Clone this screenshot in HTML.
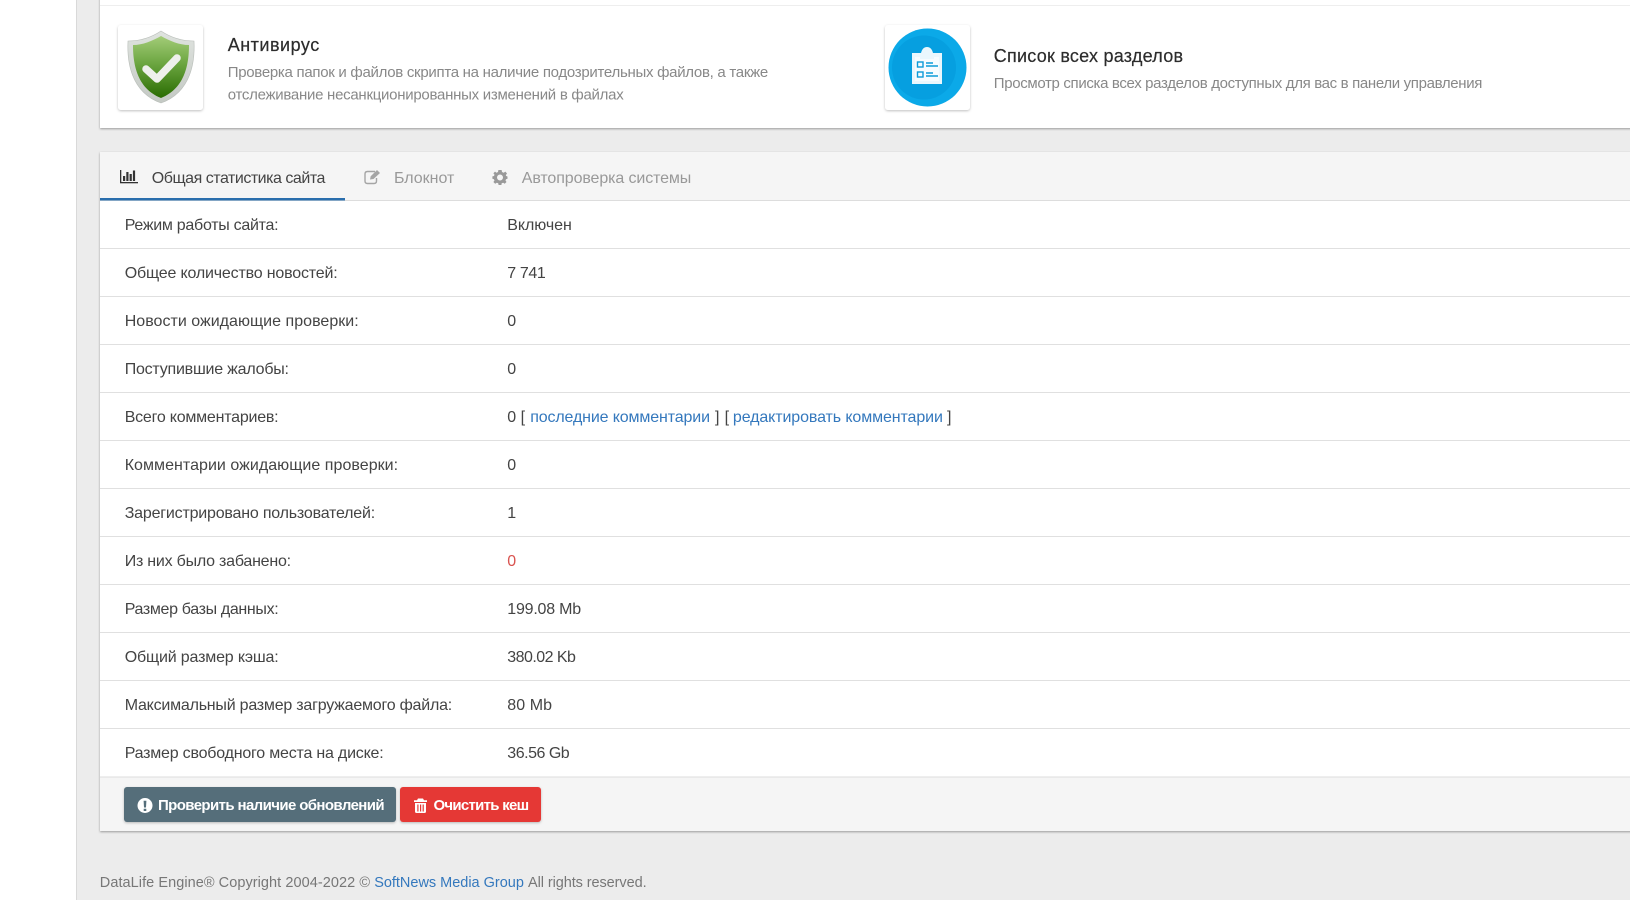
<!DOCTYPE html>
<html lang="ru">
<head>
<meta charset="utf-8">
<title>DataLife Engine</title>
<style>
html,body{margin:0;padding:0;width:1630px;height:900px;overflow:hidden;background:#ececec}
svg{display:block;position:absolute;left:0;top:0;filter:blur(.3px)}
text{font-family:"Liberation Sans",Arial,sans-serif;font-size:16px;fill:#444;white-space:pre}
.l{fill:#444}
.a{fill:#3478bd}
.d{font-size:15px;fill:#888}
.t{font-size:18px;fill:#2c2c2c;stroke:#2c2c2c;stroke-width:.2}
.m{fill:#999}
.b{font-size:15px;font-weight:bold;fill:#fff}
.f{font-size:14.5px;fill:#777}
</style>
</head>
<body>
<svg width="1630" height="900" viewBox="0 0 1630 900" xmlns="http://www.w3.org/2000/svg">
<defs>
<linearGradient id="sg" x1="0" y1="0" x2="0" y2="1"><stop offset="0" stop-color="#a3cc78"/><stop offset=".45" stop-color="#6ba540"/><stop offset="1" stop-color="#2a6c02"/></linearGradient>
<linearGradient id="sr" x1="0" y1="0" x2="0" y2="1"><stop offset="0" stop-color="#dfe3df"/><stop offset="1" stop-color="#c4c9c4"/></linearGradient>
<filter id="sh1" x="-5%" y="-20%" width="110%" height="140%"><feDropShadow dx="0" dy="1" stdDeviation="1" flood-color="#000" flood-opacity=".35"/></filter>
<filter id="sh2" x="-20%" y="-20%" width="140%" height="140%"><feDropShadow dx="0" dy="1" stdDeviation="1.2" flood-color="#000" flood-opacity=".25"/></filter>
</defs>

<!-- layout -->
<rect x="0" y="0" width="76" height="900" fill="#fff"/>
<rect x="76" y="0" width="1" height="900" fill="#d9d9d9"/>

<!-- top panel -->
<rect x="100" y="-10" width="1540" height="138" fill="#fff" filter="url(#sh1)"/>
<rect x="100" y="5" width="1530" height="1" fill="#eee"/>

<!-- shield tile -->
<rect x="118" y="25" width="85" height="85" rx="3" fill="#fff" filter="url(#sh2)"/>
<path d="M161 31 C152 37 141 41 128 41 C127 60 130 92 161 103 C192 92 195 60 194 41 C181 41 170 37 161 31Z" fill="url(#sr)" stroke="#b9beb9" stroke-width=".6"/>
<path d="M161 36 C152 41 143 45 133 45 C133 62 136 88 161 98 C186 88 189 62 189 45 C179 45 170 41 161 36Z" fill="url(#sg)"/>
<path d="M146 69 L157 79 L177 58" fill="none" stroke="#eef0ec" stroke-width="7.500" stroke-linecap="round" stroke-linejoin="round"/>

<text x="227.700" y="51" class="t" textLength="91.500">Антивирус</text>
<text x="227.700" y="77" class="d" textLength="540.500">Проверка папок и файлов скрипта на наличие подозрительных файлов, а также</text>
<text x="227.700" y="99.500" class="d" textLength="396">отслеживание несанкционированных изменений в файлах</text>

<!-- list tile -->
<rect x="885" y="25" width="85" height="85" rx="3" fill="#fff" filter="url(#sh2)"/>
<circle cx="927.500" cy="67.500" r="39" fill="#0ba9e8"/>
<circle cx="924" cy="67.500" r="32" fill="#069fe0"/>
<path d="M912 53 H921 C922 49 924 47 927 47 C930 47 932 49 933 53 H942 V84 H912Z" fill="#eaf7fd"/>
<path d="M915 57 H920 V59 H934 V57 H939 V81 H915Z" fill="#f6fcff"/>
<g fill="none" stroke="#0c9bd8" stroke-width="1.400">
<rect x="917.500" y="62" width="5.500" height="5"/><rect x="917.500" y="72" width="5.500" height="5"/>
<path d="M926 63 H933 M926 66 H938 M926 73 H933 M926 76 H938"/>
</g>

<text x="993.800" y="62" class="t" textLength="189.200">Список всех разделов</text>
<text x="993.800" y="88" class="d" textLength="488.600">Просмотр списка всех разделов доступных для вас в панели управления</text>

<!-- stats panel -->
<rect x="100" y="152" width="1540" height="679" fill="#fff" filter="url(#sh1)"/>
<rect x="100" y="152" width="1530" height="48" fill="#f5f5f5"/>
<rect x="100" y="200" width="1530" height="1" fill="#ddd"/>
<rect x="100" y="198" width="245" height="2.500" fill="#2a6ead"/>

<!-- tab icons -->
<g fill="#333">
<rect x="120" y="170" width="1.300" height="13"/><rect x="120" y="182" width="18" height="1.300"/>
<rect x="123" y="176" width="2.200" height="5"/><rect x="126.300" y="172" width="2.200" height="9"/><rect x="129.600" y="174" width="2.200" height="7"/><rect x="132.900" y="170.500" width="2.200" height="10.500"/>
</g>
<path d="M375 171.500 H367.500 Q365 171.500 365 174 V181 Q365 183.500 367.500 183.500 H374 Q376.500 183.500 376.500 181 V178" fill="none" stroke="#a5a5a5" stroke-width="1.400"/>
<path d="M370 179.500 L370.700 176.300 L377 170 L380 173 L373.500 179 Z" fill="#a5a5a5"/>
<g transform="translate(500 177)">
<path fill="#999" fill-rule="evenodd" d="M-1.600 -7 H1.600 L2 -5 L3.700 -4.300 L5.400 -5.400 L7 -3.500 L5.800 -1.900 L6.200 -1 L7.500 -.5 V1.800 L6 2.200 L5.500 3.500 L6.500 5 L4.700 6.700 L3.200 5.700 L1.700 6.300 L1.400 8 H-1.400 L-1.800 6.300 L-3.200 5.700 L-4.800 6.700 L-6.600 5 L-5.500 3.500 L-6.100 2.200 L-7.600 1.800 V-.6 L-6 -1 L-5.500 -2.300 L-6.600 -3.700 L-5 -5.400 L-3.500 -4.300 L-2 -5 Z M0 -2.500 A3 3 0 1 0 .01 3.500 A3 3 0 1 0 0 -2.500 Z"/>
</g>

<text x="151.800" y="183" class="l" textLength="173.600">Общая статистика сайта</text>
<text x="394" y="183" class="m" textLength="60.300">Блокнот</text>
<text x="521.800" y="183" class="m" textLength="169.500">Автопроверка системы</text>

<!-- row dividers -->
<g fill="#e0e0e0">
<rect x="100" y="248" width="1530" height="1"/><rect x="100" y="296" width="1530" height="1"/>
<rect x="100" y="344" width="1530" height="1"/><rect x="100" y="392" width="1530" height="1"/>
<rect x="100" y="440" width="1530" height="1"/><rect x="100" y="488" width="1530" height="1"/>
<rect x="100" y="536" width="1530" height="1"/><rect x="100" y="584" width="1530" height="1"/>
<rect x="100" y="632" width="1530" height="1"/><rect x="100" y="680" width="1530" height="1"/>
<rect x="100" y="728" width="1530" height="1"/>
</g>

<!-- labels -->
<text x="124.700" y="230" class="l" textLength="153.900">Режим работы сайта:</text>
<text x="124.700" y="278" class="l" textLength="213">Общее количество новостей:</text>
<text x="124.700" y="326" class="l" textLength="234">Новости ожидающие проверки:</text>
<text x="124.700" y="374" class="l" textLength="164.300">Поступившие жалобы:</text>
<text x="124.700" y="422" class="l" textLength="153.900">Всего комментариев:</text>
<text x="124.700" y="470" class="l" textLength="273.400">Комментарии ожидающие проверки:</text>
<text x="124.700" y="518" class="l" textLength="250.500">Зарегистрировано пользователей:</text>
<text x="124.700" y="566" class="l" textLength="166.400">Из них было забанено:</text>
<text x="124.700" y="614" class="l" textLength="154">Размер базы данных:</text>
<text x="124.700" y="662" class="l" textLength="154">Общий размер кэша:</text>
<text x="124.700" y="710" class="l" textLength="327.500">Максимальный размер загружаемого файла:</text>
<text x="124.700" y="758" class="l" textLength="259">Размер свободного места на диске:</text>

<!-- values -->
<text x="507.300" y="230" class="l" textLength="64.500">Включен</text>
<text x="507.300" y="278" class="l" textLength="38.500">7 741</text>
<text x="507.300" y="326" class="l">0</text>
<text x="507.300" y="374" class="l">0</text>
<text x="507.300" y="422" class="l">0 [</text>
<text x="530.200" y="422" class="a" textLength="179.800">последние комментарии</text>
<text x="715" y="422" class="l">]</text>
<text x="724.600" y="422" class="l">[</text>
<text x="732.900" y="422" class="a" textLength="210">редактировать комментарии</text>
<text x="947" y="422" class="l">]</text>
<text x="507.300" y="470" class="l">0</text>
<text x="507.300" y="518" class="l">1</text>
<text x="507.300" y="566" style="fill:#d9534f">0</text>
<text x="507.300" y="614" class="l" textLength="73.800">199.08 Mb</text>
<text x="507.300" y="662" class="l" textLength="68.600">380.02 Kb</text>
<text x="507.300" y="710" class="l" textLength="44.700">80 Mb</text>
<text x="507.300" y="758" class="l" textLength="62.400">36.56 Gb</text>

<!-- footer bar -->
<rect x="100" y="777" width="1530" height="54" fill="#f5f5f5"/>
<rect x="100" y="776.500" width="1530" height="1" fill="#ddd"/>

<rect x="124" y="787" width="272" height="35" rx="3" fill="#546e7a" filter="url(#sh2)"/>
<rect x="400" y="787" width="141" height="35" rx="3" fill="#e53935" filter="url(#sh2)"/>

<path fill="#fff" fill-rule="evenodd" d="M145 798 A7.500 7.500 0 1 0 145.010 813 A7.500 7.500 0 1 0 145 798Z M143.600 800.800 H146.400 L146 807.500 H144Z M143.700 808.700 H146.300 V811 H143.700Z"/>
<text x="158" y="810" class="b" textLength="226.600">Проверить наличие обновлений</text>

<path fill="#fff" fill-rule="evenodd" d="M417 800.300 L418 798.500 H423 L424 800.300 H427 V802 H414 V800.300Z M415 803 H426 V811.500 Q426 813 424.500 813 H416.500 Q415 813 415 811.500Z M417.300 804.500 V811.500 H418.500 V804.500Z M420 804.500 V811.500 H421.200 V804.500Z M422.600 804.500 V811.500 H423.800 V804.500Z"/>
<text x="433.500" y="810" class="b" textLength="95.600">Очистить кеш</text>

<!-- copyright -->
<text x="99.800" y="887" class="f" textLength="270.200">DataLife Engine® Copyright 2004-2022 ©</text>
<text x="374.200" y="887" class="a" style="font-size:14.500px" textLength="149.700">SoftNews Media Group</text>
<text x="528" y="887" class="f" textLength="118.600">All rights reserved.</text>
</svg>
</body>
</html>
